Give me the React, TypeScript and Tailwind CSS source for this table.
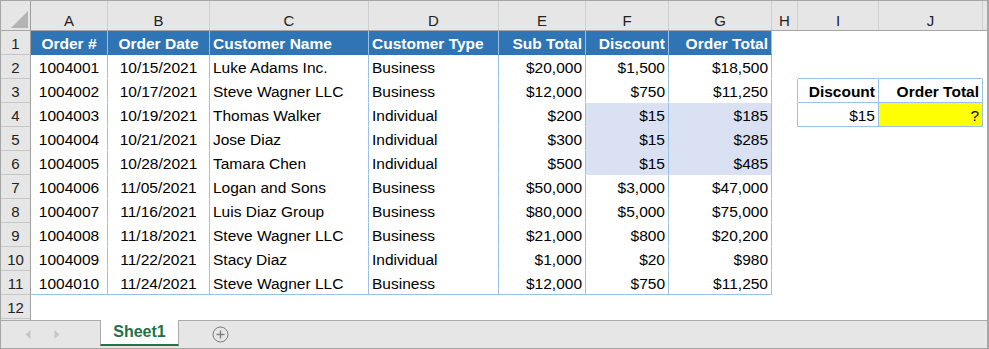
import React from "react";
import clsx from "clsx";

// sheet columns A..J, widths include the right grid line
const COLS = [
  { key: "A", w: "w-[77px]", align: "center" },
  { key: "B", w: "w-[102px]", align: "center" },
  { key: "C", w: "w-[159px]", align: "left" },
  { key: "D", w: "w-[130px]", align: "left" },
  { key: "E", w: "w-[87px]", align: "right" },
  { key: "F", w: "w-[83px]", align: "right" },
  { key: "G", w: "w-[103px]", align: "right" },
  { key: "H", w: "w-[26px]", align: "left" },
  { key: "I", w: "w-[81px]", align: "right" },
  { key: "J", w: "w-[104px]", align: "right" },
];

const HEAD = ["Order #", "Order Date", "Customer Name", "Customer Type", "Sub Total", "Discount", "Order Total"];

const ORDERS = [
  ["1004001", "10/15/2021", "Luke Adams Inc.", "Business", "$20,000", "$1,500", "$18,500"],
  ["1004002", "10/17/2021", "Steve Wagner LLC", "Business", "$12,000", "$750", "$11,250"],
  ["1004003", "10/19/2021", "Thomas Walker", "Individual", "$200", "$15", "$185"],
  ["1004004", "10/21/2021", "Jose Diaz", "Individual", "$300", "$15", "$285"],
  ["1004005", "10/28/2021", "Tamara Chen", "Individual", "$500", "$15", "$485"],
  ["1004006", "11/05/2021", "Logan and Sons", "Business", "$50,000", "$3,000", "$47,000"],
  ["1004007", "11/16/2021", "Luis Diaz Group", "Business", "$80,000", "$5,000", "$75,000"],
  ["1004008", "11/18/2021", "Steve Wagner LLC", "Business", "$21,000", "$800", "$20,200"],
  ["1004009", "11/22/2021", "Stacy Diaz", "Individual", "$1,000", "$20", "$980"],
  ["1004010", "11/24/2021", "Steve Wagner LLC", "Business", "$12,000", "$750", "$11,250"],
];

const BLUE_LINE = "border-r-[#9bc2e6]";
const BLUE_LINE_B = "border-b-[#9bc2e6]";

type Cell = {
  text?: string;
  bold?: boolean;
  bg?: string;
  color?: string;
  br?: string;
  bb?: string;
};

const getCell = (row: number, col: number): Cell => {
  const cell: Cell = {};
  // main table A1:G11
  if (col <= 6 && row <= 11) {
    cell.br = BLUE_LINE;
    if (row === 1) {
      cell.text = HEAD[col];
      cell.bold = true;
      cell.bg = "bg-[#2f75b5]";
      cell.color = "text-white";
    } else {
      cell.text = ORDERS[row - 2][col];
      if (row === 11) cell.bb = BLUE_LINE_B;
      if (row >= 4 && row <= 6 && col >= 5) cell.bg = "bg-[#d9e1f2]";
    }
  }
  // lookup box I3:J4
  if (col === 7 && (row === 3 || row === 4)) cell.br = BLUE_LINE;
  if ((col === 8 || col === 9) && row >= 2 && row <= 4) {
    cell.bb = BLUE_LINE_B;
    if (row > 2) cell.br = BLUE_LINE;
    if (row === 3) {
      cell.text = col === 8 ? "Discount" : "Order Total";
      cell.bold = true;
    }
    if (row === 4) {
      cell.text = col === 8 ? "$15" : "?";
      if (col === 9) cell.bg = "bg-[#ffff00]";
    }
  }
  return cell;
};

const alignClass = (a: string) =>
  a === "center" ? "justify-center" : a === "right" ? "justify-end pr-[3px]" : "justify-start pl-[3px]";

const SheetRow = ({ row }: { row: number }) => (
  <div className="flex h-6 shrink-0">
    <div className="flex w-[30px] shrink-0 items-end justify-center border-r border-b border-r-[#9f9f9f] border-b-[#c6c6c6] bg-[#e6e6e6] pb-[2px] text-[15px] leading-[17px] text-[#222]">
      {row}
    </div>
    {COLS.map((c, i) => {
      const cell = getCell(row, i);
      return (
        <div
          key={c.key}
          className={clsx(
            "flex shrink-0 items-end overflow-hidden whitespace-nowrap border-r border-b border-transparent pb-[2px] text-[15.5px] leading-[17px]",
            c.w,
            alignClass(c.align),
            cell.bg ?? "bg-white",
            cell.color ?? "text-black",
            cell.bold && "font-bold",
            cell.br,
            cell.bb
          )}
        >
          {cell.text}
        </div>
      );
    })}
    <div className="flex-1 bg-white" />
  </div>
);

const ColumnHeader = () => (
  <div className="flex h-[30px] shrink-0 border-b border-[#a6a6a6] bg-[#e6e6e6]">
    <div className="relative w-[30px] shrink-0 border-r border-[#9f9f9f]">
      <svg width="17" height="17" viewBox="0 0 17 17" className="absolute right-[2px] bottom-[2px]">
        <polygon points="17,0 17,17 0,17" fill="#b4b4b4" />
      </svg>
    </div>
    {COLS.map((c) => (
      <div
        key={c.key}
        className={clsx(
          "flex shrink-0 items-end justify-center border-r border-[#cfcfcf] pb-[1px] text-[15px] leading-[17px] text-[#222]",
          c.w
        )}
      >
        {c.key}
      </div>
    ))}
    <div className="flex-1" />
  </div>
);

const TabBar = () => (
  <div className="flex h-[28px] shrink-0 bg-[#e6e6e6]">
    <div className="flex w-[99px] shrink-0 items-center gap-[23px] border-t border-[#ababab] pl-[24px]">
      <svg width="6" height="9" viewBox="0 0 6 9">
        <polygon points="5.5,0 5.5,9 0.5,4.5" fill="#c6c6c6" />
      </svg>
      <svg width="6" height="9" viewBox="0 0 6 9">
        <polygon points="0.5,0 0.5,9 5.5,4.5" fill="#c6c6c6" />
      </svg>
    </div>
    <div className="flex h-[26px] w-[79px] shrink-0 items-center justify-center border-x border-b-2 border-x-[#ababab] border-b-[#217346] bg-white text-[16px] font-bold leading-[18px] text-[#217346]">
      Sheet1
    </div>
    <div className="flex flex-1 items-center border-t border-[#ababab] pl-[33px]">
      <svg width="17" height="17" viewBox="0 0 17 17">
        <circle cx="8.5" cy="8.5" r="7.5" fill="none" stroke="#7a7a7a" strokeWidth="1" />
        <line x1="8.5" y1="4.5" x2="8.5" y2="12.5" stroke="#7a7a7a" strokeWidth="1.3" />
        <line x1="4.5" y1="8.5" x2="12.5" y2="8.5" stroke="#7a7a7a" strokeWidth="1.3" />
      </svg>
    </div>
  </div>
);

export default function App() {
  const rows = Array.from({ length: 12 }, (_, i) => i + 1);
  return (
    <div className="flex h-[349px] w-[989px] flex-col overflow-hidden border border-r-2 border-[#a6a6a6] bg-white font-['Liberation_Sans',Arial,sans-serif]">
      <div className="flex flex-1 flex-col overflow-hidden">
        <ColumnHeader />
        {rows.map((r) => (
          <SheetRow key={r} row={r} />
        ))}
        <div className="flex flex-1">
          <div className="w-[30px] border-r border-[#9f9f9f] bg-[#e6e6e6]" />
        </div>
      </div>
      <TabBar />
    </div>
  );
}
